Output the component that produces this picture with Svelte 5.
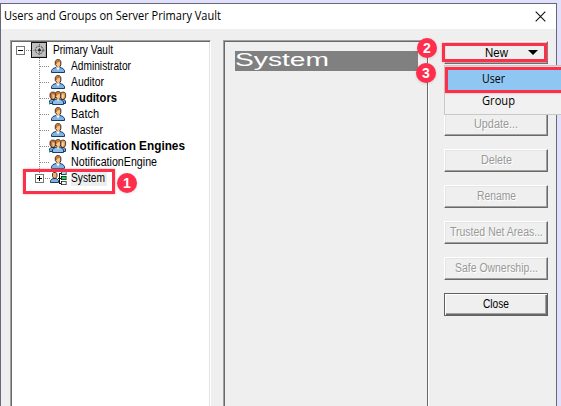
<script>
  const users = [
    { name: 'Administrator', width: 60, kind: 'user' },
    { name: 'Auditor', width: 33, kind: 'user' },
    { name: 'Auditors', width: 46, kind: 'group' },
    { name: 'Batch', width: 28, kind: 'user' },
    { name: 'Master', width: 32, kind: 'user' },
    { name: 'Notification Engines', width: 114, kind: 'group' },
    { name: 'NotificationEngine', width: 86, kind: 'user' },
    { name: 'System', width: 34, kind: 'location' }
  ];
  const actions = [
    { name: 'Update...', width: 44 },
    { name: 'Delete', width: 31 },
    { name: 'Rename', width: 39 },
    { name: 'Trusted Net Areas...', width: 93 },
    { name: 'Safe Ownership...', width: 83 }
  ];

  // Condenses or widens a label to the given width.
  function fit(node, width) {
    const natural = node.getBoundingClientRect().width;
    node.style.transform = `scaleX(${width / natural})`;
  }
</script>

{#snippet label(text, width)}
  <span class="label" style:width="{width}px"><span class="ink" use:fit={width}>{text}</span></span>
{/snippet}

{#snippet body()}
  <path d="M.5 13.5 V11.5 L2 9.6 L5 8.4 H9 L12 9.6 L13.5 11.5 V13.5 Z" fill="#7db4ea" stroke="#1b3a5e" />
  <path d="M5 8 L7 11.5 L9 8 Z" fill="#fff" />
{/snippet}

{#snippet head()}
  <path d="M4.3 2.6 L5.6 .8 H8.6 L9.8 2.6 V5.8 L8.6 8 H6.6 L4.3 5.6 Z" fill="#f6c48c" stroke="#2a1a10" />
  <path d="M4.8 5 V2.8 L6 1.3 H8.4 L9.2 2.8 L6.4 3.4 L5.8 5 Z" fill="#c87430" />
  <path d="M6.4 6.8 H8.4 V9 H6.4 Z" fill="#f6c48c" />
{/snippet}

<div class="window">
  <header>
    {@render label('Users and Groups on Server Primary Vault', 217)}
    <svg class="close" width="11" height="11" viewBox="0 0 11 11"><path d="M.7 .7 L10.3 10.3 M10.3 .7 L.7 10.3" stroke="#111" stroke-width="1.1" /></svg>
  </header>
  <main>
    <div class="tree">
      <div class="row root">
        <svg width="37" height="16" viewBox="0 0 37 16" fill="none">
          <path d="M14 8.5 H19" stroke="#888" stroke-dasharray="1 1" />
          <rect x="4.5" y="4.5" width="8" height="8" fill="#fff" stroke="#777" />
          <path d="M6 8.5 H11" stroke="#000" />
          <rect x="19.5" y=".5" width="15" height="15" fill="#c0c0c0" stroke="#111" />
          <path d="M21 14.5 H33.5 V2" stroke="#a8a8a8" />
          <circle cx="27.3" cy="8" r="3.9" stroke="#333" stroke-width=".9" stroke-dasharray="2 .8" />
          <path d="M27.5 2 V14 M21.5 8.5 H33" stroke="#555" stroke-width=".8" stroke-dasharray="1 1" />
          <circle cx="27.4" cy="8.2" r="1.4" fill="#222" />
        </svg>
        <span class="gap"></span>
        {@render label('Primary Vault', 60)}
      </div>
      {#each users as item}
        <div class="row" class:bold={item.kind === 'group'}>
          <svg width="59" height="16" viewBox="0 0 59 16" fill="none">
            <path d={item.kind === 'location' ? 'M27.5 0 V4' : 'M27.5 0 V16'} stroke="#888" stroke-dasharray="1 1" />
            <path d={item.kind === 'location' ? 'M33 8.5 H38' : 'M28 8.5 H38'} stroke="#888" stroke-dasharray="1 1" />
            {#if item.kind === 'user'}
              <g transform="translate(39 1)">{@render body()}{@render head()}</g>
            {:else if item.kind === 'group'}
              <path d="M37.5 13.5 V11 L39 9.4 H52 L53.5 11 V13.5 Z" fill="#6daae6" stroke="#1b3a5e" />
              <path d="M37.5 12 V14.5" stroke="#2d9a70" />
              <path d="M38 3.6 L39.6 2.2 H42.4 L44 3.6 V7 L42 9.4 H39.8 L38 7 Z" fill="#c87430" stroke="#2a1a10" stroke-width=".8" />
              <path d="M40.2 4.4 H43 V7 L41.6 8.4 H40.6 Z" fill="#f6c48c" />
              <path d="M48.4 3.6 L50 2.2 H52 L53.6 3.4 V7 L52.2 9.4 H50.2 L48.4 7 Z" fill="#e9a050" stroke="#2a1a10" stroke-width=".8" />
              <path d="M49 4.4 H51.6 V7 L50.8 8.4 H49.8 Z" fill="#fad9a4" />
              <path d="M40.5 14.5 V11.6 L43.6 9.2 H48.4 L51.5 11.6 V14.5 Z" fill="#8dc0f0" stroke="#1b3a5e" />
              <path d="M44.4 8.6 L46 11.4 L47.6 8.6 Z" fill="#fff" />
              <g transform="translate(39 1)">{@render head()}</g>
            {:else}
              <rect x="23.5" y="4.5" width="8" height="8" fill="#fff" stroke="#777" />
              <path d="M25 8.5 H30 M27.5 6 V11" stroke="#000" />
              <path d="M38.5 12.5 V10.6 L40.5 8.6 H44.5 L46.5 10.6 V12.5 Z" fill="#7db4ea" stroke="#1b3a5e" />
              <path d="M40.5 3.4 L41.6 2.5 H43.8 L45 3.6 V6.4 L43.6 8.4 H41.8 L40.5 6.4 Z" fill="#f0b070" stroke="#2a1a10" stroke-width=".8" />
              <path d="M46 8.5 H50 M47.5 3 V14 M47 3.5 H50 M47 13.5 H50" stroke="#111" />
              <path d="M49 1 H54.5 V5 H49 Z M49 6 H54.5 V10 H49 Z M49 11 H54.5 V15 H49 Z" fill="#111" />
              <path d="M49.8 1.7 H53.8 V4.3 H49.8 Z" fill="#9fe6ee" />
              <path d="M49.8 6.7 H53.8 V9.3 H49.8 Z" fill="#18e050" />
              <path d="M49.8 11.7 H53.8 V14.3 H49.8 Z" fill="#fff" />
            {/if}
          </svg>
          <span class="name" class:selected={item.kind === 'location'}>{@render label(item.name, item.width)}</span>
        </div>
      {/each}
    </div>
    <div class="details"><div class="heading">{@render label('System', 94)}</div></div>
    <div class="buttons">
      <button class="new"><span class="newtext">{@render label('New', 23)}</span><i></i></button>
      {#each actions as action}
        <button disabled>{@render label(action.name, action.width)}</button>
      {/each}
      <button class="default">{@render label('Close', 26)}</button>
    </div>
  </main>
</div>

<div class="menu">
  <div class="item active">{@render label('User', 23)}</div>
  <div class="item">{@render label('Group', 33)}</div>
</div>
<div class="mark system"></div>
<div class="mark create"></div>
<div class="mark user"></div>
<b class="badge one">1</b>
<b class="badge two">2</b>
<b class="badge three">3</b>

<style>
  :global(body) { background: #e0e0fc; overflow: hidden; }
  :global(#app) { position: relative; width: 561px; height: 406px; padding-top: 3px; box-sizing: border-box; overflow: hidden; font: 12px/16px "Liberation Sans", Arial, sans-serif; color: #000; }
  .window { width: 557px; height: 403px; border: 1px solid #686878; border-bottom: 0; background: #efefef; box-sizing: border-box; }
  header { height: 25px; box-sizing: border-box; padding: 0 10px 1px 3px; background: #fff; display: flex; align-items: center; justify-content: space-between; font: 12px/18px "Open Sans", "Noto Sans", sans-serif; }
  .label { display: inline-block; white-space: nowrap; }
  .ink { display: inline-block; transform-origin: left center; }
  main { display: flex; align-items: flex-start; padding: 11px 0 0 9px; }
  .tree { width: 201px; height: 366px; box-sizing: border-box; background: #fff; border: 1px solid #a0a0a0; border-right-color: #fff; border-bottom: 0; box-shadow: inset 1px 1px #696969, inset -1px 0 #e3e3e3; padding: 1px; flex-shrink: 0; }
  .row { display: flex; height: 16px; }
  .row svg { flex-shrink: 0; }
  .gap { width: 4px; }
  .bold { font-weight: bold; }
  .selected { background: #eee; padding-right: 2px; }
  .details { width: 206px; height: 366px; box-sizing: border-box; margin-left: 12px; border: 1px solid #a0a0a0; border-right-color: #fff; border-bottom: 0; box-shadow: inset 1px 1px #696969, inset -1px 0 #696969; padding: 10px 10px 0 11px; flex-shrink: 0; }
  .heading { height: 20px; background: #808080; color: #fff; font-size: 17.5px; line-height: 19px; overflow: hidden; }
  .buttons { display: flex; flex-direction: column; gap: 13px; padding: 1px 0 0 15px; }
  button { width: 104px; height: 23px; box-sizing: border-box; padding: 0 0 1px; border: 1px solid #fff; border-right-color: #696969; border-bottom-color: #696969; box-shadow: inset -1px -1px #a0a0a0, inset 1px 1px #e5e5e5; background: #efefef; color: #000; font: inherit; display: flex; align-items: center; justify-content: center; }
  button:disabled { color: #999; text-shadow: 1px 1px #fff; }
  .new { margin-bottom: 36px; position: relative; }
  .newtext { display: flex; padding-top: 2px; }
  .new i { position: absolute; right: 9px; top: 8px; border: 5px solid transparent; border-top-color: #000; border-bottom: 0; }
  .default { border-color: #606060; box-shadow: inset 1px 1px #fff, inset -1px -1px #696969, inset -2px -2px #a0a0a0; }
  .menu { position: absolute; left: 444px; top: 65px; width: 130px; height: 50px; border: 1px solid #c8c8c8; background: #f1f1f1; box-sizing: border-box; padding: 3px 2px; font: 12px/20px "Open Sans", "Noto Sans", sans-serif; }
  .item { height: 22px; padding-left: 35px; box-sizing: border-box; }
  .active { background: #8fc7f2; line-height: 19px; }
  .mark { position: absolute; box-sizing: border-box; border: 3px solid #fb304b; box-shadow: 0 0 2px #ef9ca8; }
  .system { left: 23px; top: 169px; width: 92px; height: 25px; }
  .create { left: 442px; top: 43px; width: 105px; height: 19px; }
  .user { left: 445px; top: 67px; width: 130px; height: 26px; }
  .badge { position: absolute; width: 20px; height: 20px; border-radius: 50%; background: #ff2e4c; color: #fff; text-align: center; font: bold 14px/20px "Liberation Sans", Arial, sans-serif; box-shadow: 0 1px 3px #0002; }
  .one { left: 117px; top: 173px; }
  .two { left: 417px; top: 38px; }
  .three { left: 416px; top: 63px; }
</style>
